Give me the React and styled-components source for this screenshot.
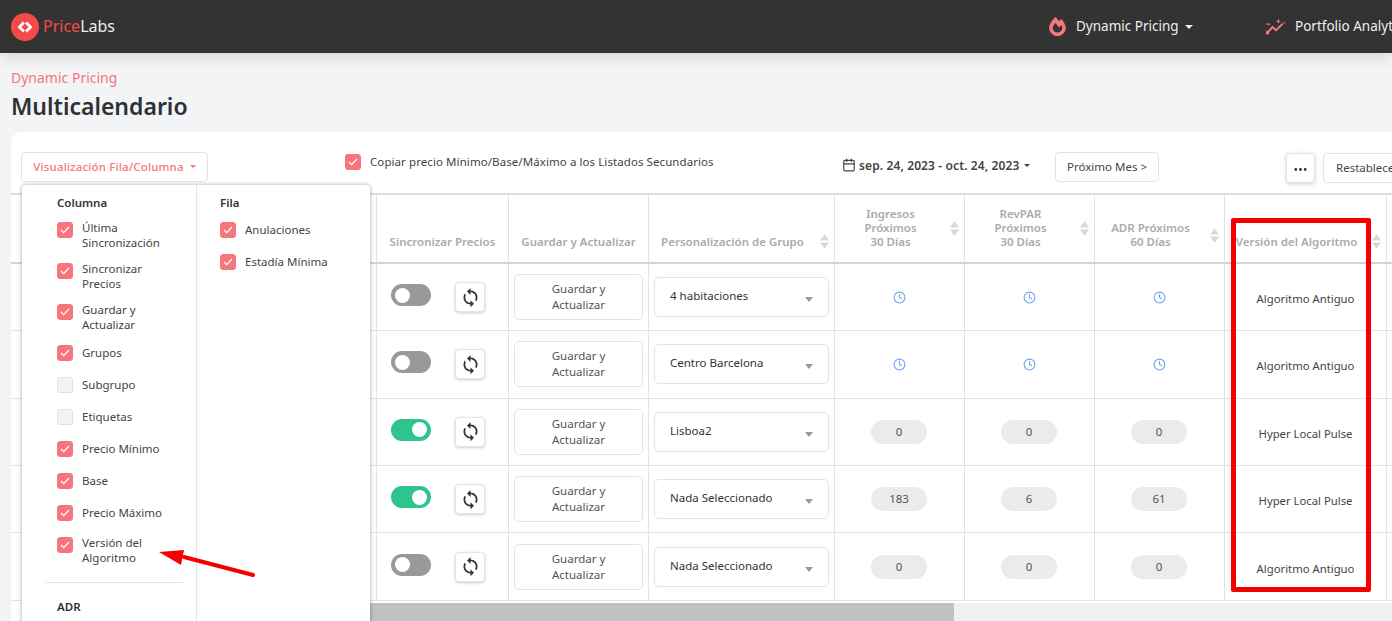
import styled, { createGlobalStyle } from "styled-components";
import { Clock, Calendar } from "lucide-react";
import { FaFireAlt } from "react-icons/fa";
import { MdSync } from "react-icons/md";
import { BsThreeDots } from "react-icons/bs";

const COLUMNS = "366px 132px 140px 186px 130px 130px 130px 162px 200px";
const FONT = `"Noto Sans", "Open Sans", sans-serif`;

const columnOptions = [
  { label: "Última Sincronización", two: true, on: true },
  { label: "Sincronizar Precios", two: true, on: true },
  { label: "Guardar y Actualizar", two: true, on: true },
  { label: "Grupos", on: true },
  { label: "Subgrupo" },
  { label: "Etiquetas" },
  { label: "Precio Mínimo", on: true },
  { label: "Base", on: true },
  { label: "Precio Máximo", on: true },
  { label: "Versión del Algoritmo", two: true, on: true },
];

const rows = [
  { height: 67, on: false, group: "4 habitaciones", stats: null, algo: "Algoritmo Antiguo" },
  { height: 67.6, on: false, group: "Centro Barcelona", stats: null, algo: "Algoritmo Antiguo" },
  { height: 67.2, on: true, group: "Lisboa2", stats: ["0", "0", "0"], algo: "Hyper Local Pulse" },
  { height: 67.6, on: true, group: "Nada Seleccionado", stats: ["183", "6", "61"], algo: "Hyper Local Pulse" },
  { height: 67.4, on: false, group: "Nada Seleccionado", stats: ["0", "0", "0"], algo: "Algoritmo Antiguo" },
];

function Logo() {
  return (
    <LogoBox>
      <svg width="28" height="28" viewBox="0 0 28 28">
        <circle cx="14" cy="14" r="14" fill="#f44a4a" />
        <path d="M12 8.5 6.5 14l5.5 5.5 1.9-1.9L10.3 14l3.6-3.6z" fill="#fff" />
        <path d="M16 8.5l5.5 5.5-5.5 5.5-1.9-1.9 3.6-3.6-3.6-3.6z" fill="#fff" />
      </svg>
      <LogoText>
        <span>Price</span>Labs
      </LogoText>
    </LogoBox>
  );
}

function TrendIcon() {
  return (
    <svg width="20" height="18" viewBox="0 0 21 18" fill="none" stroke="#f7767c" strokeWidth="2" strokeLinecap="round" strokeLinejoin="round">
      <path d="M1.5 15 7 9l3.5 3.5L17 6" />
      <circle cx="1.5" cy="15" r="1" fill="#f7767c" />
      <path d="M1 6h3M13 1.5v3M11.5 3h3M18.5 4.5h1.5" strokeWidth="1.2" />
    </svg>
  );
}

function CheckBox({ on }) {
  return (
    <Box $on={on}>
      {on && (
        <svg width="10" height="8" viewBox="0 0 10 8" fill="none" stroke="#fff" strokeWidth="1.2">
          <path d="M1 4l2.6 2.6L9 1" />
        </svg>
      )}
    </Box>
  );
}

function SortIcon() {
  return (
    <SortBox>
      <svg width="9" height="15" viewBox="0 0 9 15" fill="#d9d9d9">
        <path d="M4.5 0 9 6.5H0z" />
        <path d="M4.5 15 0 8.5h9z" />
      </svg>
    </SortBox>
  );
}

function HeadCell({ children, sort }) {
  return (
    <Th $sort={sort}>
      <ThInner>
        <ThText $sort={sort}>{children}</ThText>
        {sort && <SortIcon />}
      </ThInner>
    </Th>
  );
}

export default function App() {
  return (
    <>
      <GlobalStyle />
      <TopBar>
        <Logo />
        <Nav>
          <NavItem $width={216}>
            <FlameIcon size={19} color="#f7767c" />
            <NavLabel>Dynamic Pricing</NavLabel>
            <Caret $color="#eee" $size={4} $gap={6} />
          </NavItem>
          <NavItem>
            <TrendIcon />
            <NavLabel>Portfolio Analytics</NavLabel>
          </NavItem>
        </Nav>
      </TopBar>

      <Main>
        <Crumb>Dynamic Pricing</Crumb>
        <Title>Multicalendario</Title>

        <Card>
          <Toolbar>
            <ViewButton>
              Visualización Fila/Columna
              <Caret $color="#f7767c" $size={3} $gap={6} />
            </ViewButton>
            <CopyOption>
              <CheckBox on />
              <CopyText>Copiar precio Mínimo/Base/Máximo a los Listados Secundarios</CopyText>
            </CopyOption>
            <DateRange>
              <Calendar size={14} color="#444" />
              sep. 24, 2023 - oct. 24, 2023
              <Caret $color="#444" $size={3} $gap={2} />
            </DateRange>
            <NextButton>Próximo Mes &gt;</NextButton>
            <DotsButton>
              <BsThreeDots size={15} />
            </DotsButton>
            <ResetButton>Restablecer</ResetButton>
          </Toolbar>

          <Popover>
            <PopColumn $width={175} $left={35}>
              <PopTitle>Columna</PopTitle>
              {columnOptions.map((o) => (
                <Option key={o.label} $two={o.two}>
                  <CheckBox on={o.on} />
                  <OptionLabel $two={o.two}>{o.label}</OptionLabel>
                </Option>
              ))}
              <PopDivider />
              <PopTitle>ADR</PopTitle>
            </PopColumn>
            <PopColumn $left={23}>
              <PopTitle>Fila</PopTitle>
              <Option>
                <CheckBox on />
                <OptionLabel>Anulaciones</OptionLabel>
              </Option>
              <Option>
                <CheckBox on />
                <OptionLabel>Estadía Mínima</OptionLabel>
              </Option>
            </PopColumn>
          </Popover>

          <Table>
            <HeadRow>
              <Th />
              <HeadCell>Sincronizar Precios</HeadCell>
              <HeadCell>Guardar y Actualizar</HeadCell>
              <HeadCell sort>Personalización de Grupo</HeadCell>
              <HeadCell sort>Ingresos<br />Próximos<br />30 Días</HeadCell>
              <HeadCell sort>RevPAR<br />Próximos<br />30 Días</HeadCell>
              <HeadCell sort>ADR Próximos<br />60 Días</HeadCell>
              <HeadCell sort>Versión del Algoritmo</HeadCell>
              <Th />
            </HeadRow>
            {rows.map((r, i) => (
              <Row key={i} $height={r.height}>
                <Td />
                <SyncCell>
                  <Toggle $on={r.on} />
                  <IconButton>
                    <MdSync size={21} />
                  </IconButton>
                </SyncCell>
                <Td>
                  <SaveButton>Guardar y<br />Actualizar</SaveButton>
                </Td>
                <Td>
                  <GroupSelect>
                    {r.group}
                    <SelectCaret />
                  </GroupSelect>
                </Td>
                {[0, 1, 2].map((n) => (
                  <StatCell key={n}>
                    {r.stats ? <Pill>{r.stats[n]}</Pill> : <Clock size={13} color="#6ea3f2" />}
                  </StatCell>
                ))}
                <AlgoCell>{r.algo}</AlgoCell>
                <Td />
              </Row>
            ))}
          </Table>

          <ScrollTrack>
            <ScrollThumb />
          </ScrollTrack>
        </Card>
      </Main>

      <Highlight />
      <ArrowLayer width="110" height="40" viewBox="0 0 110 40">
        <path d="M94 35 25 17" stroke="#f40000" strokeWidth="4" strokeLinecap="round" />
        <path d="M0 12 25 10 22 25z" fill="#f40000" />
      </ArrowLayer>
    </>
  );
}

const GlobalStyle = createGlobalStyle`
  html, body {
    margin: 0;
    height: 100%;
    overflow: hidden;
    background: #f3f4f6;
    font-family: ${FONT};
    color: #444;
  }

  * {
    box-sizing: border-box;
  }
`;

const TopBar = styled.header`
  position: relative;
  z-index: 2;
  display: grid;
  grid-template-columns: 1039px 1fr;
  align-items: center;
  height: 53px;
  padding-left: 11px;
  background: #333;
  box-shadow: 0 4px 14px rgba(0, 0, 0, 0.12);
  white-space: nowrap;
  overflow: hidden;
`;

const LogoBox = styled.div`
  display: flex;
  align-items: center;
  gap: 4px;
`;

const LogoText = styled.div`
  margin-bottom: 1px;
  font-size: 16px;
  color: #eee;

  span {
    color: #f44a4a;
  }
`;

const Nav = styled.nav`
  display: flex;
  align-items: center;
`;

const NavItem = styled.div`
  display: flex;
  align-items: center;
  flex: none;
  width: ${(p) => (p.$width ? `${p.$width}px` : "auto")};
`;

const FlameIcon = styled(FaFireAlt)`
  margin-left: -2px;
`;

const NavLabel = styled.span`
  margin: 0 0 2px 9px;
  font-size: 13.5px;
  color: #eee;
`;

const Caret = styled.i`
  display: inline-block;
  flex: none;
  width: 0;
  height: 0;
  margin-left: ${(p) => p.$gap}px;
  border-left: ${(p) => p.$size}px solid transparent;
  border-right: ${(p) => p.$size}px solid transparent;
  border-top: ${(p) => p.$size}px solid ${(p) => p.$color};
`;

const Main = styled.main`
  padding: 17px 0 0 11px;
`;

const Crumb = styled.div`
  height: 17px;
  font-size: 14px;
  line-height: 15px;
  color: #f7767c;
`;

const Title = styled.h1`
  height: 45px;
  margin: 0;
  font-size: 23px;
  font-weight: 600;
  line-height: 38px;
  color: #2d3035;
`;

const Card = styled.section`
  position: relative;
  width: 1500px;
  height: 520px;
  background: #fff;
  border-radius: 10px;
  overflow: hidden;
`;

const Toolbar = styled.div`
  display: grid;
  grid-template-columns: 324px 497px 213px 231px 37px 1fr;
  height: 61px;
  padding: 20px 0 0 10px;
`;

const PlainButton = styled.button`
  display: flex;
  align-items: center;
  justify-content: center;
  height: 30px;
  padding: 0;
  background: #fff;
  border: 1px solid #e4e4e4;
  border-radius: 4px;
  font-family: inherit;
  font-size: 11.5px;
  color: #444;
  white-space: nowrap;
`;

const ViewButton = styled(PlainButton)`
  width: 187px;
  padding-bottom: 2px;
  color: #f7767c;
  font-weight: 500;
  letter-spacing: 0.15px;
`;

const NextButton = styled(PlainButton)`
  width: 104px;
  padding-bottom: 2px;
`;

const DotsButton = styled(PlainButton)`
  width: 29px;
  margin-top: 1px;
  padding-top: 2px;
  color: #333;
  box-shadow: 0 1px 4px rgba(0, 0, 0, 0.18);
`;

const ResetButton = styled(PlainButton)`
  width: 100px;
  margin-top: 1px;
  justify-content: flex-start;
  padding: 0 0 2px 12px;
`;

const CopyOption = styled.label`
  display: flex;
  align-items: center;
  gap: 9px;
  height: 18px;
  margin-top: 1px;
  white-space: nowrap;
`;

const CopyText = styled.span`
  margin-bottom: 2px;
  font-size: 11.5px;
  letter-spacing: 0.08px;
  color: #444;
`;

const DateRange = styled.div`
  display: flex;
  align-items: center;
  gap: 3px;
  height: 26px;
  font-size: 12px;
  font-weight: 600;
  letter-spacing: 0.12px;
  color: #444;
  white-space: nowrap;
`;

const Box = styled.span`
  display: flex;
  align-items: center;
  justify-content: center;
  flex: none;
  width: 16px;
  height: 16px;
  background: ${(p) => (p.$on ? "#f7767c" : "#f3f3f3")};
  border: 1px solid ${(p) => (p.$on ? "#f7767c" : "#dedede")};
  border-radius: 3px;
`;

const Popover = styled.div`
  position: absolute;
  z-index: 3;
  top: 53px;
  left: 11px;
  display: flex;
  width: 348px;
  height: 460px;
  background: #fff;
  border-radius: 4px;
  box-shadow: 0 0 4px rgba(0, 0, 0, 0.35);
`;

const PopColumn = styled.div`
  flex: ${(p) => (p.$width ? `0 0 ${p.$width}px` : 1)};
  min-width: 0;
  padding: 10px 16px 0 ${(p) => p.$left}px;
  border-right: ${(p) => (p.$width ? "1px solid #e4e4e4" : "none")};
`;

const PopTitle = styled.div`
  height: 27px;
  font-size: 11.5px;
  font-weight: 600;
  line-height: 16px;
  color: #333;
`;

const Option = styled.div`
  display: flex;
  gap: 9px;
  height: ${(p) => (p.$two ? 41 : 32)}px;
`;

const OptionLabel = styled.span`
  margin-top: ${(p) => (p.$two ? -2 : 0)}px;
  font-size: 11.5px;
  line-height: 15px;
  color: #444;
`;

const PopDivider = styled.div`
  height: 1px;
  margin: 4px 0 16px -12px;
  width: 138px;
  background: #e4e4e4;
`;

const Table = styled.div`
  border-top: 2px solid #ddd;
`;

const HeadRow = styled.div`
  display: grid;
  grid-template-columns: ${COLUMNS};
  height: 69px;
  border-bottom: 2px solid #d4d4d4;
`;

const Row = styled.div`
  display: grid;
  grid-template-columns: ${COLUMNS};
  height: ${(p) => p.$height}px;
  border-bottom: 1px solid #e3e3e3;
`;

const Th = styled.div`
  display: flex;
  align-items: flex-end;
  padding: 0 ${(p) => (p.$sort ? 5 : 0)}px 13px 0;
  border-right: 1px solid #e3e3e3;
`;

const ThInner = styled.div`
  display: flex;
  align-items: center;
  width: 100%;
`;

const ThText = styled.div`
  flex: 1;
  padding-right: ${(p) => (p.$sort ? 4 : 0)}px;
  font-size: 11.5px;
  font-weight: 600;
  line-height: 14px;
  color: #aaa;
  text-align: center;
  white-space: nowrap;
`;

const SortBox = styled.span`
  display: flex;
  flex: 0 0 9px;
`;

const Td = styled.div`
  display: flex;
  align-items: center;
  justify-content: center;
  padding: 0 5px;
  border-right: 1px solid #e3e3e3;
`;

const StatCell = styled(Td)`
  padding-right: 6px;
`;

const SyncCell = styled(Td)`
  justify-content: flex-start;
  gap: 24px;
  padding: 0 0 0 14px;
`;

const AlgoCell = styled(Td)`
  padding-top: 3px;
  font-size: 11.3px;
  color: #444;
  white-space: nowrap;
`;

const Toggle = styled.span`
  position: relative;
  flex: none;
  width: 40px;
  height: 22px;
  margin-bottom: 4px;
  background: ${(p) => (p.$on ? "#2fc48d" : "#999")};
  border-radius: 11px;

  &::after {
    content: "";
    position: absolute;
    top: 3.5px;
    left: ${(p) => (p.$on ? "21px" : "4px")};
    width: 15px;
    height: 15px;
    background: #fff;
    border-radius: 50%;
  }
`;

const IconButton = styled(PlainButton)`
  flex: none;
  width: 30px;
  color: #333;
  box-shadow: 0 1px 3px rgba(0, 0, 0, 0.2);
`;

const SaveButton = styled(PlainButton)`
  width: 129px;
  height: 46px;
  border-radius: 5px;
  line-height: 16px;
  color: #555;
`;

const GroupSelect = styled.div`
  position: relative;
  display: flex;
  align-items: center;
  width: 175px;
  height: 40px;
  padding: 0 0 3px 15px;
  border: 1px solid #e4e4e4;
  border-radius: 5px;
  font-size: 11.5px;
  color: #333;
`;

const SelectCaret = styled.i`
  position: absolute;
  top: 19px;
  right: 15px;
  width: 0;
  height: 0;
  border-left: 4px solid transparent;
  border-right: 4px solid transparent;
  border-top: 5px solid #999;
`;

const Pill = styled.span`
  width: 56px;
  height: 24px;
  background: #ebebeb;
  border-radius: 12px;
  font-size: 11.5px;
  line-height: 24px;
  color: #555;
  text-align: center;
`;

const ScrollTrack = styled.div`
  height: 18px;
  margin: 2px 0 0 11px;
  background: #f0f0f0;
`;

const ScrollThumb = styled.div`
  width: 911px;
  height: 18px;
  margin-left: 21px;
  background: #c0c0c0;
`;

const Highlight = styled.div`
  position: absolute;
  z-index: 4;
  top: 218px;
  left: 1231px;
  width: 140px;
  height: 374px;
  border: 5px solid #f40000;
  border-radius: 2px;
  pointer-events: none;
`;

const ArrowLayer = styled.svg`
  position: absolute;
  z-index: 4;
  top: 540px;
  left: 159px;
  pointer-events: none;
`;
